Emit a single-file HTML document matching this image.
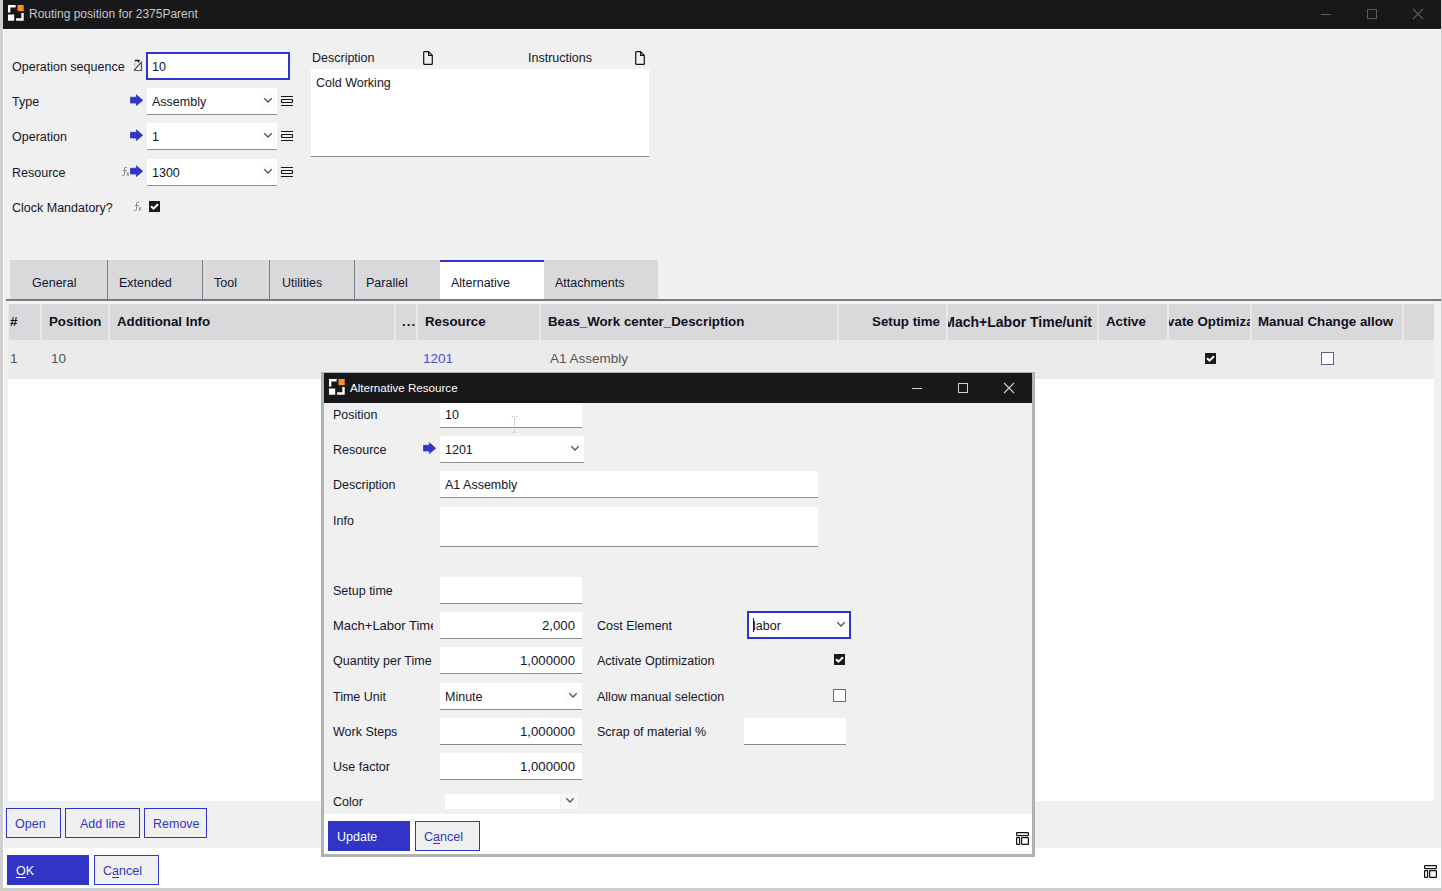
<!DOCTYPE html>
<html><head><meta charset="utf-8">
<style>
*{box-sizing:border-box;margin:0;padding:0}
html,body{width:1442px;height:891px;overflow:hidden;background:#cfcfcf;font-family:"Liberation Sans",sans-serif;font-size:12.5px;color:#15152a}
.a{position:absolute}
.t{position:absolute;white-space:nowrap;line-height:14px}
.b{font-weight:bold;font-size:13.3px;color:#101020}
.inp{position:absolute;background:#fff;border-bottom:1px solid #8c8c8c}
.chev{position:absolute;width:16px;height:14px;background:#fbfbfb}
.chev svg{position:absolute;left:0;top:0}
.btn{position:absolute;border:1px solid #3035c8;background:#f0f0f0}
.bt{position:absolute;white-space:nowrap;line-height:14px;color:#3035c8}
.u{text-decoration:underline;text-underline-offset:2px}
.hc{position:absolute;top:304px;height:36px;background:#d9d9dc;overflow:hidden}
</style></head><body>
<!-- main window -->
<div class="a" style="left:3px;top:0;width:1438px;height:888px;background:#fff"></div>
<div class="a" style="left:3px;top:0;width:1438px;height:29px;background:#18181a"></div>
<div class="a" style="left:4px;top:30px;width:1437px;height:818px;background:#f0f0f0"></div>

<!-- logo main -->
<svg class="a" style="left:8px;top:5px" width="16.2" height="16.2" viewBox="0 0 17 17">
<path d="M0 0H8V2.5H2.5V8H0Z" fill="#fff"/>
<rect x="10" y="0" width="6.5" height="6.5" fill="#f7902a"/>
<rect x="0" y="10" width="6.5" height="6.5" fill="#fff"/>
<path d="M16.5 8.5V16.5H8.5V14H14V8.5Z" fill="#fff"/>
</svg>
<div class="t" style="left:29px;top:7px;color:#c4c8c8;font-size:12px">Routing position for 2375Parent</div>
<!-- title controls -->
<div class="a" style="left:1321px;top:14px;width:10px;height:1px;background:#5a5a5a"></div>
<div class="a" style="left:1367px;top:9px;width:10px;height:10px;border:1px solid #5a5a5a"></div>
<svg class="a" style="left:1412px;top:8px" width="12" height="12" viewBox="0 0 12 12"><path d="M1 1L11 11M11 1L1 11" stroke="#5a5a5a" stroke-width="1.1"/></svg>

<!-- top form -->
<div class="t" style="left:12px;top:60px">Operation sequence</div>
<div class="t" style="left:12px;top:95px">Type</div>
<div class="t" style="left:12px;top:130px">Operation</div>
<div class="t" style="left:12px;top:166px">Resource</div>
<div class="t" style="left:12px;top:201px">Clock Mandatory?</div>

<div class="a" style="left:146px;top:52px;width:144px;height:28px;background:#fff;border:2px solid #3035c8"></div>
<div class="t" style="left:152px;top:60px">10</div>

<div class="inp" style="left:147px;top:88px;width:130px;height:27px"></div>
<div class="t" style="left:152px;top:95px">Assembly</div>
<div class="chev" style="left:260px;top:94px"><svg width="16" height="14"><path d="M4.3 4.3L8 8L11.7 4.3" stroke="#555" stroke-width="1.3" fill="none"/></svg></div>
<div class="inp" style="left:147px;top:123px;width:130px;height:27px"></div>
<div class="t" style="left:152px;top:130px">1</div>
<div class="chev" style="left:260px;top:129px"><svg width="16" height="14"><path d="M4.3 4.3L8 8L11.7 4.3" stroke="#555" stroke-width="1.3" fill="none"/></svg></div>
<div class="inp" style="left:147px;top:159px;width:130px;height:27px"></div>
<div class="t" style="left:152px;top:166px">1300</div>
<div class="chev" style="left:260px;top:165px"><svg width="16" height="14"><path d="M4.3 4.3L8 8L11.7 4.3" stroke="#555" stroke-width="1.3" fill="none"/></svg></div>

<!-- description -->
<div class="t" style="left:312px;top:51px">Description</div>
<div class="t" style="left:528px;top:51px">Instructions</div>
<div class="a" style="left:311px;top:69px;width:338px;height:88px;background:#fff;border-bottom:1px solid #8c8c8c"></div>
<div class="t" style="left:316px;top:76px">Cold Working</div>

<!-- tabs -->
<div class="a" style="left:10px;top:260px;width:648px;height:39px;background:#d9d9dc"></div>
<div class="a" style="left:6px;top:299px;width:1435px;height:2px;background:#7a7a80"></div>
<div class="a" style="left:440px;top:260px;width:104px;height:39px;background:#fff;border-top:2px solid #3035c8"></div>
<div class="a" style="left:107px;top:260px;width:1px;height:39px;background:#7a7a80"></div>
<div class="a" style="left:202px;top:260px;width:1px;height:39px;background:#7a7a80"></div>
<div class="a" style="left:269px;top:260px;width:1px;height:39px;background:#7a7a80"></div>
<div class="a" style="left:354px;top:260px;width:1px;height:39px;background:#7a7a80"></div>
<div class="t" style="left:32px;top:276px">General</div>
<div class="t" style="left:119px;top:276px">Extended</div>
<div class="t" style="left:214px;top:276px">Tool</div>
<div class="t" style="left:282px;top:276px">Utilities</div>
<div class="t" style="left:366px;top:276px">Parallel</div>
<div class="t" style="left:451px;top:276px">Alternative</div>
<div class="t" style="left:555px;top:276px">Attachments</div>

<!-- grid -->
<div class="a" style="left:8px;top:301px;width:1426px;height:500px;background:#fff"></div>
<div class="a" style="left:8px;top:301px;width:1426px;height:3px;background:#f5f5f5"></div>
<div class="a" style="left:8px;top:304px;width:1426px;height:36px;background:#e8e8e8"></div>
<div class="a" style="left:8px;top:340px;width:1426px;height:39px;background:#ebebeb"></div>
<div class="hc" style="left:9px;width:31px"><div class="t b" style="left:1px;top:11px">#</div></div>
<div class="hc" style="left:42px;width:66px"><div class="t b" style="left:7px;top:11px">Position</div></div>
<div class="hc" style="left:110px;width:284px"><div class="t b" style="left:7px;top:11px">Additional Info</div></div>
<div class="hc" style="left:396px;width:20px"><div class="t b" style="left:6px;top:11px;letter-spacing:1px">...</div></div>
<div class="hc" style="left:418px;width:121px"><div class="t b" style="left:7px;top:11px">Resource</div></div>
<div class="hc" style="left:541px;width:296px"><div class="t b" style="left:7px;top:11px">Beas_Work center_Description</div></div>
<div class="hc" style="left:839px;width:107px"><div class="t b" style="right:6px;top:11px">Setup time</div></div>
<div class="hc" style="left:948px;width:149px"><div class="t b" style="right:5px;top:11px;font-size:14px">Mach+Labor Time/unit</div></div>
<div class="hc" style="left:1099px;width:68px"><div class="t b" style="left:7px;top:11px">Active</div></div>
<div class="hc" style="left:1169px;width:81px"><div class="t b" style="left:-27px;top:11px">Activate Optimization</div></div>
<div class="hc" style="left:1252px;width:150px"><div class="t b" style="left:6px;top:11px">Manual Change allow</div></div>
<div class="hc" style="left:1404px;width:30px"><div class="t b" style="left:0px;top:11px"></div></div>
<div class="t" style="left:10px;top:352px;color:#555;font-size:13.5px">1</div>
<div class="t" style="left:51px;top:352px;color:#555;font-size:13.5px">10</div>
<div class="t" style="left:423px;top:352px;color:#4b4fd8;font-size:13.5px">1201</div>
<div class="t" style="left:550px;top:352px;color:#555;font-size:13.5px">A1 Assembly</div>

<!-- bottom buttons -->
<div class="btn" style="left:6px;top:808px;width:55px;height:30px"></div><div class="bt" style="left:15px;top:817px">Open</div>
<div class="btn" style="left:65px;top:808px;width:75px;height:30px"></div><div class="bt" style="left:80px;top:817px">Add line</div>
<div class="btn" style="left:144px;top:808px;width:63px;height:30px"></div><div class="bt" style="left:153px;top:817px">Remove</div>
<div class="a" style="left:7px;top:855px;width:82px;height:30px;background:#3035c8"></div>
<div class="t" style="left:16px;top:864px;color:#fff"><span class="u">O</span>K</div>
<div class="btn" style="left:94px;top:855px;width:65px;height:30px"></div><div class="bt" style="left:103px;top:864px">C<span class="u">a</span>ncel</div>


<!-- icons top form -->
<svg class="a" style="left:133px;top:59px" width="10" height="13" viewBox="0 0 10 13">
<path d="M1.8 2.2V7.6" stroke="#bdbdbd" stroke-width="1.1" fill="none"/>
<path d="M1.8 1.5H5.6Q6.3 1.5 6.6 2.3" stroke="#111" stroke-width="1.3" fill="none"/>
<path d="M5.5 1.6V3.6" stroke="#111" stroke-width="1.2" fill="none"/>
<path d="M1 11.4L9 2.5" stroke="#333" stroke-width="1.1" fill="none"/>
<path d="M1.2 11.5H8.5V3.6" stroke="#555" stroke-width="1.2" fill="none"/>
</svg>
<svg class="a" style="left:130px;top:94px" width="14" height="13" viewBox="0 0 14 13"><path d="M0.4 3.3H6.4V0.8L12.7 6.3L6.4 11.6V9H0.4Z" fill="#3035c8" stroke="#3035c8" stroke-width="0.8" stroke-linejoin="round"/></svg>
<svg class="a" style="left:130px;top:129px" width="14" height="13" viewBox="0 0 14 13"><path d="M0.4 3.3H6.4V0.8L12.7 6.3L6.4 11.6V9H0.4Z" fill="#3035c8" stroke="#3035c8" stroke-width="0.8" stroke-linejoin="round"/></svg>
<svg class="a" style="left:130px;top:165px" width="14" height="13" viewBox="0 0 14 13"><path d="M0.4 3.3H6.4V0.8L12.7 6.3L6.4 11.6V9H0.4Z" fill="#3035c8" stroke="#3035c8" stroke-width="0.8" stroke-linejoin="round"/></svg>
<svg class="a" style="left:121px;top:166px" width="9" height="11" viewBox="0 0 9 11"><path d="M6 1.4H4.3Q3.5 1.4 3.5 2.2V8.6Q3.5 9.4 2.7 9.4H1.1M2.1 4.5H5.8" stroke="#8a8a8a" stroke-width="1" fill="none"/><path d="M5.9 6.2L7.8 9.7M7.8 6.2L5.9 9.7" stroke="#8a8a8a" stroke-width="0.9" fill="none"/></svg>
<svg class="a" style="left:133px;top:201px" width="9" height="11" viewBox="0 0 9 11"><path d="M6 1.4H4.3Q3.5 1.4 3.5 2.2V8.6Q3.5 9.4 2.7 9.4H1.1M2.1 4.5H5.8" stroke="#8a8a8a" stroke-width="1" fill="none"/><path d="M5.9 6.2L7.8 9.7M7.8 6.2L5.9 9.7" stroke="#8a8a8a" stroke-width="0.9" fill="none"/></svg>
<svg class="a" style="left:280px;top:95px" width="14" height="12" viewBox="0 0 14 12"><path d="M1.5 1.5H12.5M1.5 10.5H12.5" stroke="#151515" stroke-width="1.2" stroke-linecap="round"/><rect x="1.5" y="4.5" width="11" height="3" rx="0.8" stroke="#151515" stroke-width="1.2" fill="none"/></svg>
<svg class="a" style="left:280px;top:130px" width="14" height="12" viewBox="0 0 14 12"><path d="M1.5 1.5H12.5M1.5 10.5H12.5" stroke="#151515" stroke-width="1.2" stroke-linecap="round"/><rect x="1.5" y="4.5" width="11" height="3" rx="0.8" stroke="#151515" stroke-width="1.2" fill="none"/></svg>
<svg class="a" style="left:280px;top:166px" width="14" height="12" viewBox="0 0 14 12"><path d="M1.5 1.5H12.5M1.5 10.5H12.5" stroke="#151515" stroke-width="1.2" stroke-linecap="round"/><rect x="1.5" y="4.5" width="11" height="3" rx="0.8" stroke="#151515" stroke-width="1.2" fill="none"/></svg>
<svg class="a" style="left:149px;top:201px" width="11" height="11" viewBox="0 0 11 11"><rect width="11" height="11" fill="#1a1a1a"/><path d="M2 5.3L4.5 7.6L9 3.2" stroke="#fff" stroke-width="2" fill="none"/></svg>
<svg class="a" style="left:423px;top:51px" width="10" height="14" viewBox="0 0 10 14"><path d="M0.7 1.3Q0.7 0.7 1.3 0.7H5.6L9.3 4.4V12.7Q9.3 13.3 8.7 13.3H1.3Q0.7 13.3 0.7 12.7Z" stroke="#111" stroke-width="1.2" fill="none"/><path d="M5.6 0.7V4.4H9.3" stroke="#111" stroke-width="1.2" fill="none"/></svg>
<svg class="a" style="left:635px;top:51px" width="10" height="14" viewBox="0 0 10 14"><path d="M0.7 1.3Q0.7 0.7 1.3 0.7H5.6L9.3 4.4V12.7Q9.3 13.3 8.7 13.3H1.3Q0.7 13.3 0.7 12.7Z" stroke="#111" stroke-width="1.2" fill="none"/><path d="M5.6 0.7V4.4H9.3" stroke="#111" stroke-width="1.2" fill="none"/></svg>
<!-- grid checkboxes -->
<svg class="a" style="left:1205px;top:353px" width="11" height="11" viewBox="0 0 11 11"><rect width="11" height="11" fill="#1a1a1a"/><path d="M2 5.3L4.5 7.6L9 3.2" stroke="#fff" stroke-width="2" fill="none"/></svg>
<div class="a" style="left:1321px;top:352px;width:13px;height:13px;background:#fff;border:1px solid #5c6488"></div>
<!-- bottom right layout icon -->
<svg class="a" style="left:1424px;top:865px" width="13" height="13" viewBox="0 0 13 13"><rect x="0.6" y="0.6" width="11.8" height="3" rx="0.5" stroke="#111" stroke-width="1.2" fill="none"/><rect x="0.6" y="5.6" width="3" height="6.8" rx="0.5" stroke="#111" stroke-width="1.2" fill="none"/><rect x="5.6" y="5.6" width="6.8" height="6.8" rx="0.5" stroke="#111" stroke-width="1.2" fill="none"/></svg>

<!-- dialog -->
<div class="a" style="left:321px;top:372px;width:714px;height:485px;background:#b2b2b2"></div>
<div class="a" style="left:324px;top:373px;width:708px;height:481px;background:#fff"></div>
<div class="a" style="left:324px;top:373px;width:708px;height:30px;background:#18181a"></div>
<div class="a" style="left:324px;top:403px;width:708px;height:411px;background:#f0f0f0"></div>
<div class="t" style="left:350px;top:381px;color:#fff;font-size:11.6px">Alternative Resource</div>
<svg class="a" style="left:329px;top:379px" width="16.2" height="16.2" viewBox="0 0 17 17">
<path d="M0 0H8V2.5H2.5V8H0Z" fill="#fff"/>
<rect x="10" y="0" width="6.5" height="6.5" fill="#f7902a"/>
<rect x="0" y="10" width="6.5" height="6.5" fill="#fff"/>
<path d="M16.5 8.5V16.5H8.5V14H14V8.5Z" fill="#fff"/>
</svg>
<div class="a" style="left:912px;top:388px;width:10px;height:1px;background:#d0d0d0"></div>
<div class="a" style="left:958px;top:383px;width:10px;height:10px;border:1px solid #d0d0d0"></div>
<svg class="a" style="left:1003px;top:382px" width="12" height="12" viewBox="0 0 12 12"><path d="M1 1L11 11M11 1L1 11" stroke="#d0d0d0" stroke-width="1.1"/></svg>
<div class="t" style="left:333px;top:408px;">Position</div>
<div class="inp" style="left:440px;top:403px;width:142px;height:25px"></div>
<div class="t" style="left:445px;top:408px;">10</div>
<svg class="a" style="left:511px;top:416px" width="7" height="17" viewBox="0 0 7 17"><path d="M0.5 0.5H3M4 0.5H6.5M3.5 1V16M0.5 16.5H3M4 16.5H6.5" stroke="#cfcfcf" stroke-width="0.9" fill="none"/></svg>
<div class="t" style="left:333px;top:443px;">Resource</div>
<svg class="a" style="left:423px;top:442px" width="14" height="13" viewBox="0 0 14 13"><path d="M0.4 3.3H6.4V0.8L12.7 6.3L6.4 11.6V9H0.4Z" fill="#3035c8" stroke="#3035c8" stroke-width="0.8" stroke-linejoin="round"/></svg>
<div class="inp" style="left:440px;top:436px;width:144px;height:27px"></div>
<div class="t" style="left:445px;top:443px;">1201</div>
<div class="chev" style="left:567px;top:442px"><svg width="16" height="14"><path d="M4.3 4.3L8 8L11.7 4.3" stroke="#555" stroke-width="1.3" fill="none"/></svg></div>
<div class="t" style="left:333px;top:478px;">Description</div>
<div class="inp" style="left:440px;top:471px;width:378px;height:27px"></div>
<div class="t" style="left:445px;top:478px;">A1 Assembly</div>
<div class="t" style="left:333px;top:514px;">Info</div>
<div class="inp" style="left:440px;top:507px;width:378px;height:40px"></div>
<div class="t" style="left:333px;top:584px;">Setup time</div>
<div class="inp" style="left:440px;top:577px;width:142px;height:27px"></div>
<div class="t" style="left:333px;top:619px;width:100px;overflow:hidden;font-size:13px">Mach+Labor Time</div>
<div class="inp" style="left:440px;top:612px;width:142px;height:27px"></div>
<div class="t" style="right:867px;top:619px;font-size:13.2px">2,000</div>
<div class="t" style="left:597px;top:619px;">Cost Element</div>
<div class="a" style="left:747px;top:611px;width:104px;height:28px;background:#fff;border:2px solid #3035c8"></div>
<div class="t" style="left:753px;top:619px;">labor</div>
<div class="a" style="left:753px;top:618px;width:1px;height:14px;background:#111"></div>
<div class="chev" style="left:833px;top:618px"><svg width="16" height="14"><path d="M4.3 4.3L8 8L11.7 4.3" stroke="#555" stroke-width="1.3" fill="none"/></svg></div>
<div class="t" style="left:333px;top:654px;width:100px;overflow:hidden">Quantity per Time</div>
<div class="inp" style="left:440px;top:647px;width:142px;height:27px"></div>
<div class="t" style="right:867px;top:654px;font-size:13.2px">1,000000</div>
<div class="t" style="left:597px;top:654px;">Activate Optimization</div>
<svg class="a" style="left:834px;top:654px" width="11" height="11" viewBox="0 0 11 11"><rect width="11" height="11" fill="#1a1a1a"/><path d="M2 5.3L4.5 7.6L9 3.2" stroke="#fff" stroke-width="2" fill="none"/></svg>
<div class="t" style="left:333px;top:690px;">Time Unit</div>
<div class="inp" style="left:440px;top:683px;width:142px;height:27px"></div>
<div class="t" style="left:445px;top:690px;">Minute</div>
<div class="chev" style="left:565px;top:689px"><svg width="16" height="14"><path d="M4.3 4.3L8 8L11.7 4.3" stroke="#555" stroke-width="1.3" fill="none"/></svg></div>
<div class="t" style="left:597px;top:690px;">Allow manual selection</div>
<div class="a" style="left:833px;top:689px;width:13px;height:13px;background:#fff;border:1.3px solid #5c6a90"></div>
<div class="t" style="left:333px;top:725px;">Work Steps</div>
<div class="inp" style="left:440px;top:718px;width:142px;height:27px"></div>
<div class="t" style="right:867px;top:725px;font-size:13.2px">1,000000</div>
<div class="t" style="left:597px;top:725px;">Scrap of material %</div>
<div class="inp" style="left:744px;top:718px;width:102px;height:27px"></div>
<div class="t" style="left:333px;top:760px;">Use factor</div>
<div class="inp" style="left:440px;top:753px;width:142px;height:27px"></div>
<div class="t" style="right:867px;top:760px;font-size:13.2px">1,000000</div>
<div class="t" style="left:333px;top:795px;">Color</div>
<div class="a" style="left:445px;top:794px;width:115px;height:15px;background:#fff"></div>
<div class="a" style="left:561px;top:794px;width:16px;height:15px;background:#f8f8f8"></div>
<svg class="a" style="left:561px;top:794px" width="16" height="15"><path d="M5.3 4.3L9 8L12.7 4.3" stroke="#555" stroke-width="1.3" fill="none"/></svg>
<div class="a" style="left:328px;top:821px;width:82px;height:30px;background:#3035c8"></div>
<div class="t" style="left:337px;top:830px;color:#fff">Update</div>
<div class="btn" style="left:415px;top:821px;width:65px;height:30px"></div><div class="bt" style="left:424px;top:830px">C<span class="u">a</span>ncel</div>
<svg class="a" style="left:1016px;top:832px" width="13" height="13" viewBox="0 0 13 13"><rect x="0.6" y="0.6" width="11.8" height="3" rx="0.5" stroke="#111" stroke-width="1.2" fill="none"/><rect x="0.6" y="5.6" width="3" height="6.8" rx="0.5" stroke="#111" stroke-width="1.2" fill="none"/><rect x="5.6" y="5.6" width="6.8" height="6.8" rx="0.5" stroke="#111" stroke-width="1.2" fill="none"/></svg>
</body></html>
